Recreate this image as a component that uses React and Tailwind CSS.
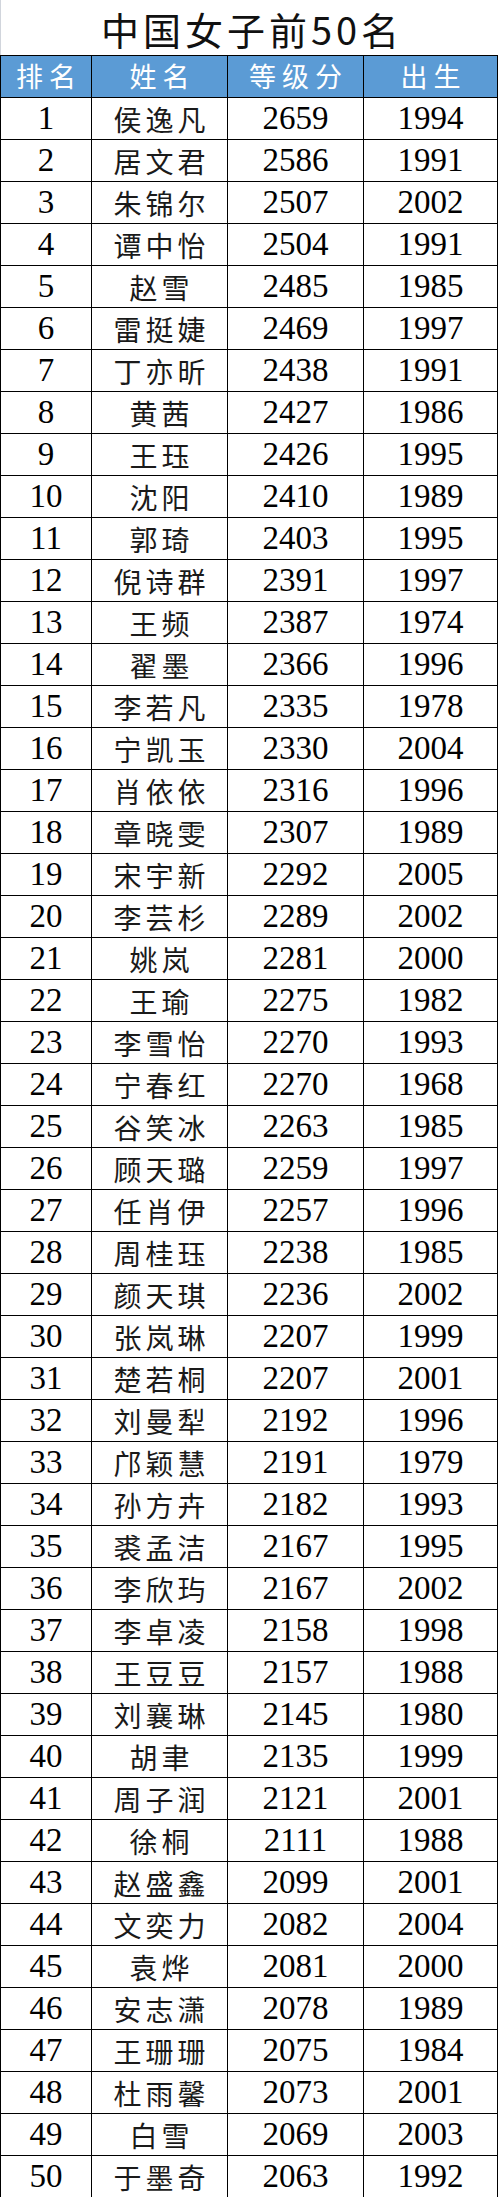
const rows = [
  [1, "侯逸凡", 2659, 1994],
  [2, "居文君", 2586, 1991],
  [3, "朱锦尔", 2507, 2002],
  [4, "谭中怡", 2504, 1991],
  [5, "赵雪", 2485, 1985],
  [6, "雷挺婕", 2469, 1997],
  [7, "丁亦昕", 2438, 1991],
  [8, "黄茜", 2427, 1986],
  [9, "王珏", 2426, 1995],
  [10, "沈阳", 2410, 1989],
  [11, "郭琦", 2403, 1995],
  [12, "倪诗群", 2391, 1997],
  [13, "王频", 2387, 1974],
  [14, "翟墨", 2366, 1996],
  [15, "李若凡", 2335, 1978],
  [16, "宁凯玉", 2330, 2004],
  [17, "肖依依", 2316, 1996],
  [18, "章晓雯", 2307, 1989],
  [19, "宋宇新", 2292, 2005],
  [20, "李芸杉", 2289, 2002],
  [21, "姚岚", 2281, 2000],
  [22, "王瑜", 2275, 1982],
  [23, "李雪怡", 2270, 1993],
  [24, "宁春红", 2270, 1968],
  [25, "谷笑冰", 2263, 1985],
  [26, "顾天璐", 2259, 1997],
  [27, "任肖伊", 2257, 1996],
  [28, "周桂珏", 2238, 1985],
  [29, "颜天琪", 2236, 2002],
  [30, "张岚琳", 2207, 1999],
  [31, "楚若桐", 2207, 2001],
  [32, "刘曼犁", 2192, 1996],
  [33, "邝颖慧", 2191, 1979],
  [34, "孙方卉", 2182, 1993],
  [35, "裘孟洁", 2167, 1995],
  [36, "李欣玙", 2167, 2002],
  [37, "李卓凌", 2158, 1998],
  [38, "王豆豆", 2157, 1988],
  [39, "刘襄琳", 2145, 1980],
  [40, "胡聿", 2135, 1999],
  [41, "周子润", 2121, 2001],
  [42, "徐桐", 2111, 1988],
  [43, "赵盛鑫", 2099, 2001],
  [44, "文奕力", 2082, 2004],
  [45, "袁烨", 2081, 2000],
  [46, "安志潇", 2078, 1989],
  [47, "王珊珊", 2075, 1984],
  [48, "杜雨馨", 2073, 2001],
  [49, "白雪", 2069, 2003],
  [50, "于墨奇", 2063, 1992],
];

const font = { fontFamily: '"Liberation Serif", "Noto Sans CJK SC", serif' };

const App = () => {
  return (
    <div className="w-[499px] bg-white text-black" style={font}>
      {/* title */}
      <div className="h-[55px] flex items-center justify-center border-l border-gray-300 pt-[3px]">
        <h1 className="text-[38px] tracking-[4px] font-['Noto_Sans_CJK_SC'] font-normal text-[#111] leading-none pl-[4px]">
          中国女子前50名
        </h1>
      </div>

      <div className="border-t border-l border-black w-[498px]">
        {/* header */}
        <div className="grid grid-cols-[91px_136px_136px_134px] h-[42px] bg-[#5b9bd5] text-white border-b border-black font-['Noto_Sans_CJK_SC'] text-[27px] tracking-[6px]">
          <div className="flex items-center justify-center border-r border-black pl-[6px]">排名</div>
          <div className="flex items-center justify-center border-r border-black pl-[6px]">姓名</div>
          <div className="flex items-center justify-center border-r border-black pl-[6px]">等级分</div>
          <div className="flex items-center justify-center border-r border-black pl-[6px]">出生</div>
        </div>

        {rows.map(([rank, name, rating, year]) => (
          <div
            key={rank}
            className="grid grid-cols-[91px_136px_136px_134px] h-[42px] border-b border-black"
          >
            <div className="flex items-center justify-center border-r border-black text-[33px] leading-none">
              {rank}
            </div>
            <div className="flex items-center justify-center border-r border-black text-[28px] tracking-[4px] pl-[4px] font-['Noto_Sans_CJK_SC'] text-[#1a1a1a] leading-none">
              {name}
            </div>
            <div className="flex items-center justify-center border-r border-black text-[33px] leading-none">
              {rating}
            </div>
            <div className="flex items-center justify-center border-r border-black text-[33px] leading-none">
              {year}
            </div>
          </div>
        ))}
      </div>
    </div>
  );
};

export default App;
